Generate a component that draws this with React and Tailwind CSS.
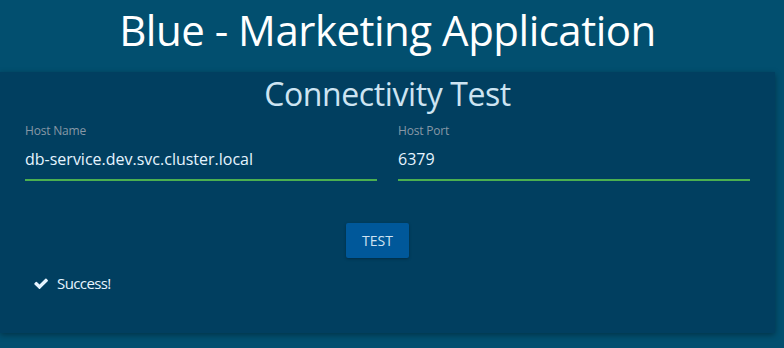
function Field({ label, value }) {
  return (
    <div className="flex flex-col">
      <label className="text-[12px] leading-[16px] tracking-[-0.2px] text-[#8798a6]">{label}</label>
      <div className="mt-[9px] h-[33px] border-b-2 border-[#4caf50] text-[16px] leading-[22px] text-[#e6f4ff]">
        {value}
      </div>
    </div>
  )
}

function CheckIcon() {
  return (
    <svg viewBox="90 400 1585 990" className="h-[11px] w-[14px]" fill="currentColor">
      <path d="M1671 566q0 40-28 68l-724 724-136 136q-28 28-68 28t-68-28l-136-136-362-362q-28-28-28-68t28-68l136-136q28-28 68-28t68 28l294 295 656-657q28-28 68-28t68 28l136 136q28 28 28 68z" />
    </svg>
  )
}

export default function App() {
  return (
    <div
      className="h-[348px] w-[784px] overflow-hidden bg-[#024f6f]"
      style={{ fontFamily: '"Open Sans", "Noto Sans", sans-serif' }}
    >
      <h1 className="w-[775px] pt-[1px] text-center text-[42px] leading-[57px] tracking-[-0.5px] text-white">
        Blue - Marketing Application
      </h1>

      <div className="mt-[14px] w-[775px] h-[261px] bg-[#013f60] px-[25px] shadow-[0_2px_6px_rgba(0,0,0,0.35)]">
        <h2 className="pt-[2px] text-center text-[32px] leading-[40px] tracking-[-0.4px] text-[#cde4f2]">
          Connectivity Test
        </h2>

        <div className="mt-[9px] grid grid-cols-2 gap-[21px]">
          <Field label="Host Name" value="db-service.dev.svc.cluster.local" />
          <Field label="Host Port" value="6379" />
        </div>

        <div className="mt-[42px] flex justify-center pr-[20px]">
          <button className="h-[35px] w-[63px] rounded-[2px] bg-[#00589a] text-[14px] text-[#cfe3f1] shadow-[0_1px_3px_rgba(0,0,0,0.3)]">
            TEST
          </button>
        </div>

        <div className="mt-[14px] flex items-center gap-[9px] pl-[9px] text-[15px] text-[#e6f4ff]">
          <CheckIcon />
          <span className="tracking-[-0.6px]">Success!</span>
        </div>
      </div>
    </div>
  )
}
